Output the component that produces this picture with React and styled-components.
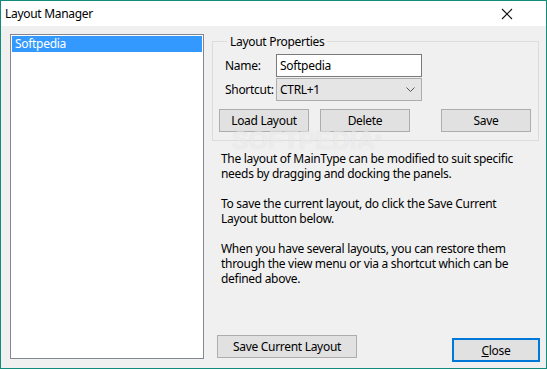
import React from 'react'
import styled, { createGlobalStyle } from 'styled-components';

const GlobalStyle = createGlobalStyle`
  html, body {
    margin: 0;
    padding: 0;
    background: #ffffff;
  }
  body {
    font-family: "Noto Sans", "Open Sans", sans-serif;
    font-size: 12px;
    letter-spacing: -0.3px;
    color: #000;
  }
`

function CloseGlyph() {
  return (
    <svg width="12" height="12" viewBox="0 0 12 12">
      <path d="M1 1 L11 11 M11 1 L1 11" stroke="#111" strokeWidth="1.1" fill="none" />
    </svg>
  )
}

function Chevron() {
  return (
    <svg width="9" height="6" viewBox="0 0 9 6">
      <path d="M0.5 0.5 L4.5 4.5 L8.5 0.5" stroke="#555" strokeWidth="1" fill="none" />
    </svg>
  )
}

function App() {
  const layouts = ['Softpedia'];

  return (
    <>
      <GlobalStyle />
      <Window>
        <TitleBar>
          <Title>Layout Manager</Title>
          <CloseBox><CloseGlyph /></CloseBox>
        </TitleBar>

        <Body>
          <ListBox>
            {layouts.map((name, index) => (
              <ListItem key={index} selected={index === 0}>{name}</ListItem>
            ))}
          </ListBox>

          <RightColumn>
            <GroupBox>
              <Legend>Layout Properties</Legend>
              <FormGrid>
                <Label>Name:</Label>
                <TextInput>Softpedia</TextInput>
                <Label>Shortcut:</Label>
                <Select>
                  <span>CTRL+1</span>
                  <Chevron />
                </Select>
              </FormGrid>
              <ButtonRow>
                <Button>Load Layout</Button>
                <Button>Delete</Button>
                <Button $push>Save</Button>
              </ButtonRow>
            </GroupBox>

            <Help>
              <p>The layout of MainType can be modified to suit specific needs by dragging and docking the panels.</p>
              <p>To save the current layout, do click the Save Current Layout button below.</p>
              <p>When you have several layouts, you can restore them through the view menu or via a shortcut which can be defined above.</p>
            </Help>

            <BottomRow>
              <Button $width={140}>Save Current Layout</Button>
              <DefaultButton><u>C</u>lose</DefaultButton>
            </BottomRow>

            <Watermark>SOFTPEDIA<sup>®</sup></Watermark>
          </RightColumn>
        </Body>
      </Window>
    </>
  )
}

export default App;

const Window = styled.div`
  width: 547px;
  height: 369px;
  box-sizing: border-box;
  border: 1px solid #128a7c;
  background: #f0f0f0;
  display: flex;
  flex-direction: column;
`

const TitleBar = styled.div`
  height: 25px;
  background: #ffffff;
  display: flex;
  align-items: center;
  justify-content: space-between;
  padding-left: 4px;
  padding-right: 33px;
`

const Title = styled.div`
  font-size: 12px;
  margin-top: -1px;
`

const CloseBox = styled.div`
  display: flex;
  align-items: center;
  margin-top: 1px;
`

const Body = styled.div`
  flex: 1;
  display: flex;
  padding: 8px 6px 6px 9px;
  gap: 8px;
  min-height: 0;
`

const ListBox = styled.div`
  width: 197px;
  box-sizing: border-box;
  border: 1px solid #828790;
  background: #ffffff;
  padding: 1px;
  margin-bottom: 3px;
`

const ListItem = styled.div`
  height: 16px;
  line-height: 15px;
  padding-left: 3px;
  background: ${props => props.selected ? '#3399ff' : 'transparent'};
  color: ${props => props.selected ? '#ffffff' : '#000'};
`

const RightColumn = styled.div`
  flex: 1;
  display: flex;
  flex-direction: column;
  position: relative;
`

const GroupBox = styled.fieldset`
  margin: 0;
  margin-right: 1px;
  padding: 5px 7px 8px 6px;
  border: 1px solid #dcdcdc;
  min-width: 0;
`

const Legend = styled.legend`
  padding: 0 3px;
  margin-left: 8px;
  line-height: 15px;
`

const FormGrid = styled.div`
  display: grid;
  grid-template-columns: 51px 146px;
  grid-auto-rows: 23px;
  row-gap: 1px;
  padding-left: 6px;
  align-items: center;
`

const Label = styled.span`
  line-height: 15px;
  white-space: nowrap;
`

const TextInput = styled.div`
  height: 23px;
  box-sizing: border-box;
  border: 1px solid #7a7a7a;
  background: #ffffff;
  padding-left: 3px;
  line-height: 21px;
`

const Select = styled.div`
  height: 23px;
  box-sizing: border-box;
  border: 1px solid #adadad;
  background: #e5e5e5;
  padding: 0 6px 0 3px;
  display: flex;
  align-items: center;
  justify-content: space-between;
`

const ButtonRow = styled.div`
  display: flex;
  gap: 11px;
  margin-top: 8px;
`

const Button = styled.div`
  width: ${props => props.$width || 90}px;
  height: 23px;
  box-sizing: border-box;
  border: 1px solid #adadad;
  background: #e1e1e1;
  display: flex;
  align-items: center;
  justify-content: center;
  margin-left: ${props => props.$push ? '20px' : '0'};
`

const DefaultButton = styled(Button)`
  width: 88px;
  height: 24px;
  border: 2px solid #0078d7;
  margin-top: 3px;
`

const Help = styled.div`
  padding-left: 9px;
  padding-right: 16px;
  margin-top: 10px;
  line-height: 15px;

  p {
    margin: 0 0 15px 0;
  }
`

const BottomRow = styled.div`
  margin-top: auto;
  display: flex;
  align-items: flex-start;
  justify-content: space-between;
  padding-left: 5px;
`

const Watermark = styled.div`
  position: absolute;
  left: 20px;
  top: 97px;
  font-family: "Liberation Sans", sans-serif;
  font-weight: bold;
  font-size: 25px;
  letter-spacing: 0;
  line-height: 18px;
  height: 18px;
  color: rgba(255, 255, 255, 0.5);
  text-shadow: 0 0 1px rgba(120, 120, 120, 0.2);
  pointer-events: none;

  sup {
    font-size: 9px;
    vertical-align: top;
    position: relative;
    top: -2px;
  }
`
